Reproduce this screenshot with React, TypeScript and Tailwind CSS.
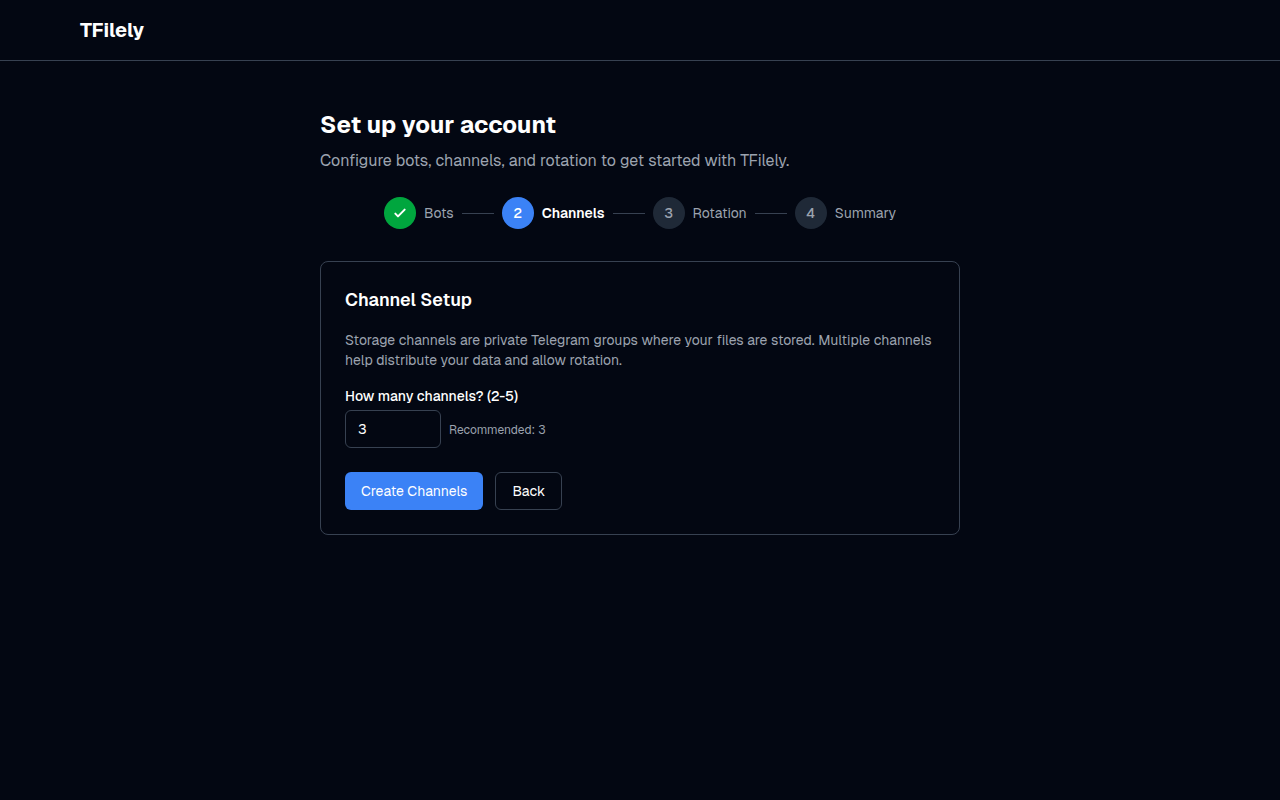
import React from 'react';
import clsx from 'clsx';

type StepState = 'done' | 'active' | 'todo';

const STEPS = ['Bots', 'Channels', 'Rotation', 'Summary'];

function getState(index: number, current: number): StepState {
    if (index < current) return 'done';
    return index === current ? 'active' : 'todo';
}

function CheckIcon() {
    return (
        <svg className="size-4" viewBox="0 0 24 24" fill="none" stroke="currentColor" strokeWidth={3} aria-hidden="true">
            <path strokeLinecap="round" strokeLinejoin="round" d="M5 13l4 4L19 7" />
        </svg>
    );
}

function Stepper({ current }: { current: number }) {
    return (
        <ol className="mb-8 flex items-center justify-center gap-2">
            {STEPS.map((label, i) => {
                const state = getState(i, current);
                return (
                    <li key={label} className="flex items-center gap-2">
                        <span
                            className={clsx(
                                'flex size-8 items-center justify-center rounded-full text-sm font-medium',
                                state === 'done' && 'bg-green-600 text-white',
                                state === 'active' && 'bg-[#3b82f6] text-white',
                                state === 'todo' && 'bg-[#1f2937] text-[#9ca3af]',
                            )}
                        >
                            {state === 'done' ? <CheckIcon /> : i + 1}
                        </span>
                        <span className={clsx('text-sm', state === 'active' ? 'font-semibold text-white' : 'text-[#9ca3af]')}>
                            {label}
                        </span>
                        {i < STEPS.length - 1 && <span className="h-px w-8 bg-[#374151]" />}
                    </li>
                );
            })}
        </ol>
    );
}

function ChannelSetup() {
    const [count, setCount] = React.useState(3);

    return (
        <form className="rounded-lg border border-[#374151] p-6" onSubmit={(e) => e.preventDefault()}>
            <h2 className="mb-4 text-lg font-semibold">Channel Setup</h2>
            <p className="mb-4 text-sm text-[#9ca3af]">
                Storage channels are private Telegram groups where your files are stored. Multiple channels help
                distribute your data and allow rotation.
            </p>
            <label htmlFor="channel-count" className="mb-1 block text-sm font-medium">
                How many channels? (2-5)
            </label>
            <div className="mb-6 flex items-baseline gap-2">
                <input
                    id="channel-count"
                    type="number"
                    min={2}
                    max={5}
                    value={count}
                    onChange={(e) => setCount(Number(e.target.value))}
                    className="w-24 rounded-md border border-[#374151] px-3 py-2 text-sm"
                />
                <span className="text-xs text-[#9ca3af]">Recommended: 3</span>
            </div>
            <div className="flex gap-3">
                <button type="submit" className="rounded-md bg-[#3b82f6] px-4 py-2 text-sm text-white">
                    Create Channels
                </button>
                <button type="button" className="rounded-md border border-[#374151] px-4 py-2 text-sm">
                    Back
                </button>
            </div>
        </form>
    );
}

export default function App() {
    return (
        <div className="min-h-screen bg-gray-950 font-['Geist','Inter',sans-serif] text-white">
            <header className="border-b border-[#374151]">
                <div className="mx-auto max-w-6xl px-4 py-4">
                    <a href="/" className="text-xl font-bold">TFilely</a>
                </div>
            </header>
            <main className="mx-auto max-w-2xl px-4 py-12">
                <h1 className="mb-2 text-2xl font-bold">Set up your account</h1>
                <p className="mb-6 text-[#9ca3af]">Configure bots, channels, and rotation to get started with TFilely.</p>
                <Stepper current={1} />
                <ChannelSetup />
            </main>
        </div>
    );
}
